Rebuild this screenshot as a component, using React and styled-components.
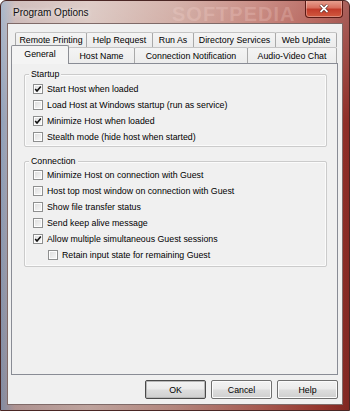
import React from 'react';
import styled, { createGlobalStyle } from 'styled-components';

const GlobalStyle = createGlobalStyle`
  html, body { margin: 0; padding: 0; background: #ffffff; }
  body { font-family: "Liberation Sans", Arial, sans-serif; }
`;

const Window = styled.div`
  position: relative;
  width: 350px;
  height: 411px;
  box-sizing: border-box;
  display: flex;
  flex-direction: column;
  padding: 0 6px 5px;
  border: 1px solid #4a2624;
  border-radius: 6px 6px 0 0;
  overflow: hidden;
  background:
    linear-gradient(180deg, rgba(255, 255, 255, 0.25) 0%, rgba(255, 255, 255, 0) 30%, rgba(60, 10, 10, 0.15) 100%),
    linear-gradient(90deg, #8da2bd 0%, #c2aaa8 4%, #d4bdb6 25%, #c79a90 50%, #b8675c 75%, #a33d33 92%, #8c2c26 100%);
`;

const TitleBar = styled.div`
  position: relative;
  height: 22px;
  display: flex;
  align-items: center;
  padding-left: 6px;
  font-size: 10px;
  color: #101010;
  text-shadow: 0 0 4px rgba(255, 255, 255, 0.9);
`;

const Watermark = styled.span`
  position: absolute;
  left: 165px;
  top: 2px;
  font: bold 20px "Liberation Sans", Arial, sans-serif;
  letter-spacing: 1px;
  color: rgba(255, 225, 220, 0.22);
  text-shadow: none;
  pointer-events: none;
`;

const CloseButton = styled.div`
  position: absolute;
  right: 0;
  top: -1px;
  width: 38px;
  height: 18px;
  box-sizing: border-box;
  border: 1px solid #5a1a15;
  border-top: none;
  border-radius: 0 0 4px 4px;
  background: linear-gradient(180deg, #e9a595 0%, #d8705f 45%, #c23b2a 55%, #d25a40 100%);
  display: flex;
  align-items: center;
  justify-content: center;
  box-shadow: inset 0 0 0 1px rgba(255, 255, 255, 0.3);
`;

const Client = styled.div`
  flex: 1;
  display: flex;
  flex-direction: column;
  background: #f0f0f0;
  border: 1px solid #7f6a68;
  padding: 8px 4px 0 3px;
  font-size: 8.8px;
  color: #000;
`;

const TabRow = styled.div`
  display: flex;
  height: ${p => p.$h}px;
  margin-left: ${p => p.$indent}px;
  position: relative;
  z-index: ${p => p.$z};
`;

const Tab = styled.div`
  width: ${p => p.$w}px;
  box-sizing: border-box;
  display: flex;
  align-items: center;
  justify-content: center;
  white-space: nowrap;
  border: 1px solid #a9a9a9;
  border-top-color: #c4c4c4;
  border-bottom: none;
  margin-right: -1px;
  background: linear-gradient(180deg, #f4f4f4 0%, #ececec 100%);
  border-radius: 2px 2px 0 0;
`;

const ActiveTab = styled(Tab)`
  background: #f4f4f4;
  height: 19px;
  margin-top: -2px;
  margin-left: -1px;
  padding-bottom: 2px;
  position: relative;
  z-index: 2;
  border-color: #8c8e94;
`;

const Panel = styled.div`
  height: 312px;
  width: 327px;
  box-sizing: border-box;
  border: 1px solid #898c95;
  background: #f0f0f0;
  padding: 10px 0 0 12px;
  display: flex;
  flex-direction: column;
  gap: 14px;
`;

const Group = styled.div`
  position: relative;
  width: 303px;
  height: ${p => p.$h}px;
  box-sizing: border-box;
  border: 1px solid #cbcbcb;
  border-radius: 2px;
  box-shadow: inset 0 0 0 1px #fbfbfb;
  padding: ${p => p.$pt}px 0 0 8px;
`;

const Legend = styled.span`
  position: absolute;
  left: 4px;
  top: -6px;
  padding: 0 2px;
  line-height: 11px;
  background: #f0f0f0;
`;

const CheckRow = styled.div`
  height: 16px;
  display: flex;
  align-items: center;
  gap: 4px;
  padding-left: ${p => p.$indent || 0}px;
  white-space: nowrap;
`;

const Box = styled.span`
  width: 10px;
  height: 10px;
  box-sizing: border-box;
  border: 1px solid #8e8f8f;
  background: linear-gradient(135deg, #dcdcdc 0%, #f8f8f8 100%);
  box-shadow: inset 0 0 0 1px #fdfdfd;
  display: flex;
  align-items: center;
  justify-content: center;
`;

const ButtonBar = styled.div`
  display: flex;
  justify-content: flex-end;
  gap: 5px;
  margin-top: 5px;
`;

const Button = styled.div`
  width: 61px;
  height: 19px;
  box-sizing: border-box;
  display: flex;
  align-items: center;
  justify-content: center;
  border: 1px solid ${p => (p.$default ? '#4a4a4a' : '#707070')};
  border-radius: 2px;
  background: linear-gradient(180deg, #f3f3f3 0%, #ebebeb 48%, #dddddd 52%, #cfcfcf 100%);
  box-shadow: inset 0 0 0 1px ${p => (p.$default ? '#b8b8b8' : '#fbfbfb')};
`;

const Check = ({ checked }) => (
  <Box>
    {checked && (
      <svg width="8" height="8" viewBox="0 0 8 8">
        <path d="M1.2 4 L3 6 L6.8 1.6" fill="none" stroke="#111" strokeWidth="1.6" />
      </svg>
    )}
  </Box>
);

const Option = ({ checked, indent, children }) => (
  <CheckRow $indent={indent}>
    <Check checked={checked} />
    <span>{children}</span>
  </CheckRow>
);

const backTabs = [
  ['Remote Printing', 72],
  ['Help Request', 67],
  ['Run As', 42],
  ['Directory Services', 83],
  ['Web Update', 62],
];

const frontTabs = [
  ['Host Name', 67],
  ['Connection Notification', 114],
  ['Audio-Video Chat', 90],
];

export default function App() {
  return (
    <>
      <GlobalStyle />
      <Window>
        <TitleBar>
          Program Options
          <Watermark>SOFTPEDIA</Watermark>
          <CloseButton>
            <svg width="10" height="9" viewBox="0 0 10 9">
              <path d="M1.5 1 L8.5 8 M8.5 1 L1.5 8" stroke="#3a0e0a" strokeWidth="3" />
              <path d="M1.5 1 L8.5 8 M8.5 1 L1.5 8" stroke="#fff" strokeWidth="1.8" />
            </svg>
          </CloseButton>
        </TitleBar>
        <Client>
          <TabRow $h={15} $indent={4} $z={1}>
            {backTabs.map(([label, w]) => (
              <Tab key={label} $w={w}>{label}</Tab>
            ))}
          </TabRow>
          <TabRow $h={16} $indent={1} $z={2}>
            <ActiveTab $w={58}>General</ActiveTab>
            {frontTabs.map(([label, w]) => (
              <Tab key={label} $w={w}>{label}</Tab>
            ))}
          </TabRow>
          <Panel>
            <Group $h={73} $pt={6}>
              <Legend>Startup</Legend>
              <Option checked>Start Host when loaded</Option>
              <Option>Load Host at Windows startup (run as service)</Option>
              <Option checked>Minimize Host when loaded</Option>
              <Option>Stealth mode (hide host when started)</Option>
            </Group>
            <Group $h={106} $pt={5}>
              <Legend>Connection</Legend>
              <Option>Minimize Host on connection with Guest</Option>
              <Option>Host top most window on connection with Guest</Option>
              <Option>Show file transfer status</Option>
              <Option>Send keep alive message</Option>
              <Option checked>Allow multiple simultaneous Guest sessions</Option>
              <Option indent={15}>Retain input state for remaining Guest</Option>
            </Group>
          </Panel>
          <ButtonBar>
            <Button $default>OK</Button>
            <Button>Cancel</Button>
            <Button>Help</Button>
          </ButtonBar>
        </Client>
      </Window>
    </>
  );
}
